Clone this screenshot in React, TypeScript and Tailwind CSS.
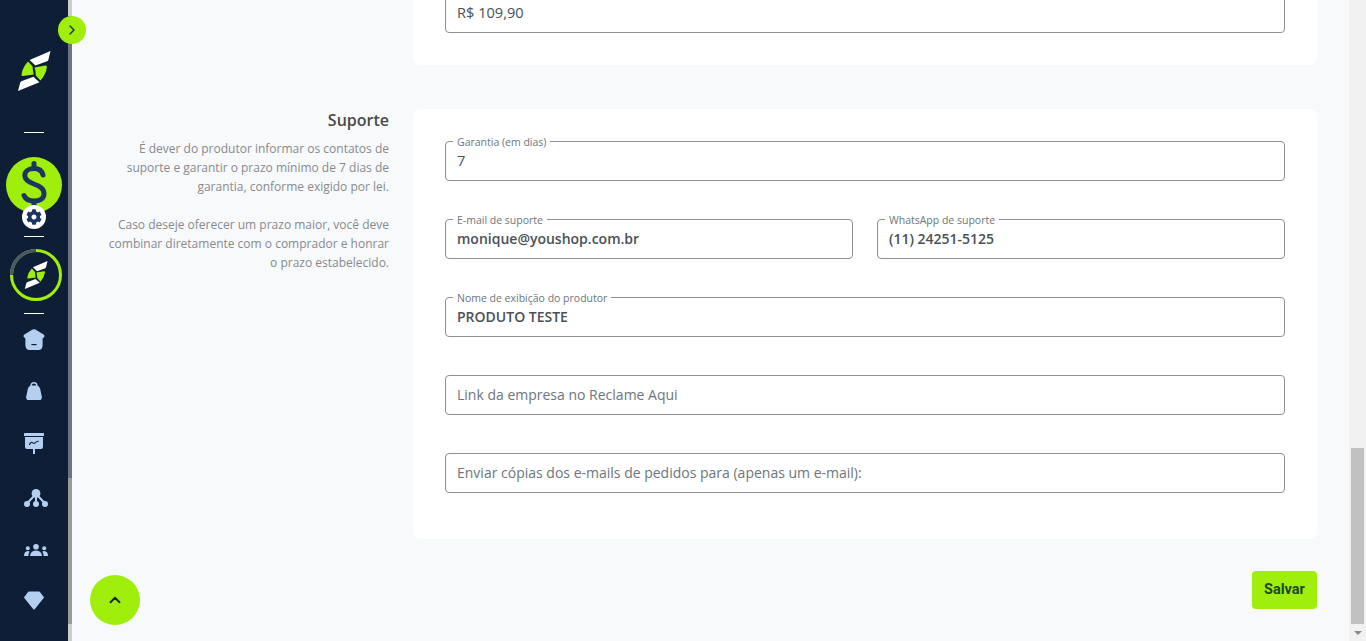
import { ChevronRight, ChevronUp } from "lucide-react";
import { FaCog } from "react-icons/fa";

const LIME = "bg-[#a0ee0c]";

function LogoPaths() {
  return (
    <>
      <path fill="#ffffff" d="M50.5 51 L48.3 60 Q48 61 46.4 61.6 L35.4 65.6 L29.6 60 Z" />
      <path fill="#a0ee0c" d="M28 61.6 L32.6 66.6 Q32.6 70.6 33.8 74.5 L23 76 Q21.2 76.2 21.5 74.4 Q22.6 67.5 28 61.6 Z" />
      <path fill="#a0ee0c" d="M40.4 80.6 L35.8 75.4 Q35.8 71.4 34.6 67.5 L45.4 65.6 Q47.2 65.4 46.9 67.2 Q45.8 74.6 40.4 80.6 Z" />
      <path fill="#ffffff" d="M18 91 L20.1 83 Q20.4 81.6 22 81 L33.4 76.8 L39.4 82.2 Z" />
    </>
  );
}

function SideDivider({ className }: { className: string }) {
  return <div className={`h-px w-5 bg-white ${className}`} />;
}

function Field({ label, value, placeholder, strong }: { label?: string; value?: string; placeholder?: string; strong?: boolean }) {
  return (
    <div className="relative flex h-10 min-w-0 items-center rounded-[4px] border border-[#8f8f8f] bg-white px-[11px] text-sm">
      {label && (
        <span className="absolute -top-[7px] left-[7px] bg-white px-1 text-[10.5px] leading-[14px] text-[#6c757d]">{label}</span>
      )}
      {value ? (
        <span className={`text-[#495057] ${strong ? "font-semibold" : "mb-[2px] text-[14.6px] font-medium"}`}>{value}</span>
      ) : (
        <span className="text-[#6c757d]">{placeholder}</span>
      )}
    </div>
  );
}

function Sidebar() {
  return (
    <aside className="flex h-full w-[68px] shrink-0 flex-col items-center bg-[#0e1e36] pt-[51px]">
      <svg viewBox="17 51 34 40" className="h-10 w-[34px]">
        <LogoPaths />
      </svg>
      <SideDivider className="mt-[41px]" />
      <div className={`relative mt-6 h-14 w-14 rounded-full ${LIME}`}>
        <svg viewBox="6 157 56 56" className="h-14 w-14" fill="none" stroke="#1a3560" strokeWidth="5" strokeLinecap="round">
          <path d="M43 175 C42 171 38.5 168.6 34 168.6 C28 168.6 24.8 171.6 24.8 175.5 C24.8 180 28.5 182 34 184 C40 186 44 188.5 44 193.5 C44 198.5 40 201 34 201 C29 201 25.5 199 24 195.5" />
          <path d="M34 163.5 V168 M34 202 V208" />
        </svg>
        <div className="absolute left-4 top-12 flex h-6 w-6 items-center justify-center rounded-full bg-white">
          <FaCog className="h-4 w-4 text-[#1a3560]" />
        </div>
      </div>
      <SideDivider className="mt-[23px]" />
      <svg viewBox="0 0 52 52" className="relative left-[2px] mt-3 h-[52px] w-[52px]" fill="none">
        <circle cx="26" cy="26" r="24.5" stroke="#a0ee0c" strokeWidth="3" />
        <path d="M1.5 26 A24.5 24.5 0 0 1 26 1.5" stroke="#4a5568" strokeWidth="3" />
        <svg x="14" y="12" width="24" height="28" viewBox="17 51 34 40">
          <LogoPaths />
        </svg>
      </svg>
      <SideDivider className="mt-3" />

      <svg viewBox="0 0 22 21" className="mt-[15px] h-[21px] w-[22px]">
        <path fill="#b5cff0" d="M9.6 0.6 Q11 -0.2 12.4 0.6 L20.6 5.4 Q22 6.4 21.2 8 L19.6 9.4 V16 Q19.6 21 15.4 21 H6.6 Q2.4 21 2.4 16 V9.4 L0.8 8 Q0 6.4 1.4 5.4 Z" />
        <path stroke="#0e1e36" strokeWidth="1.2" d="M8.4 15.6 H13.6" />
      </svg>
      <svg viewBox="0 0 16 18" className="mt-8 h-[18px] w-4">
        <path fill="#b5cff0" d="M8 0 C10.4 0 11.6 1.6 11.7 3.8 C13.4 4.6 14 6 14.4 8 L15.8 14.6 C16.2 16.8 15 18 13.4 18 H2.6 C1 18 -0.2 16.8 0.2 14.6 L1.6 8 C2 6 2.6 4.6 4.3 3.8 C4.4 1.6 5.6 0 8 0 Z" />
        <path fill="#0e1e36" d="M8 1.6 C6.8 1.6 6 2.4 5.9 3.4 H10.1 C10 2.4 9.2 1.6 8 1.6 Z" />
      </svg>
      <svg viewBox="0 0 20 21" className="mt-[33px] h-[21px] w-5">
        <rect x="0" y="0" width="20" height="3" rx="0.6" fill="#b5cff0" />
        <path fill="#b5cff0" d="M1 4 H19 V14 Q19 16 17 16 H11 V21 H9 V16 H3 Q1 16 1 14 Z" />
        <path fill="none" stroke="#0e1e36" strokeWidth="1.1" strokeLinecap="round" d="M5.5 11.5 Q7 8.5 8.6 9.6 Q10 11 11.4 9.6 Q12.6 8 14.4 8.2" />
      </svg>
      <svg viewBox="0 0 24 18" className="relative left-[2px] mt-[35px] h-[18px] w-6" fill="#b5cff0">
        <circle cx="12" cy="4.4" r="4.4" />
        <circle cx="3" cy="15" r="3" />
        <circle cx="12" cy="15" r="3" />
        <circle cx="21" cy="15" r="3" />
        <path fill="none" stroke="#b5cff0" strokeWidth="2" d="M10 7 L3.4 14 M12 7 V14 M14 7 L20.6 14" />
      </svg>
      <svg viewBox="0 0 24 12" className="relative left-[2px] mt-[37px] h-3 w-6" fill="#b5cff0">
        <circle cx="12" cy="2.8" r="2.8" />
        <circle cx="3.8" cy="4.2" r="2" />
        <circle cx="20.2" cy="4.2" r="2" />
        <path d="M6 12 Q6.4 6.6 12 6.4 Q17.6 6.6 18 12 Z" />
        <path d="M0 12 Q0 7.2 4 7 L5.6 7.6 Q4.6 9.4 4.4 12 Z" />
        <path d="M24 12 Q24 7.2 20 7 L18.4 7.6 Q19.4 9.4 19.6 12 Z" />
      </svg>
      <svg viewBox="0 0 21 19" className="mt-[35px] h-[19px] w-5">
        <path fill="#b5cff0" stroke="#b5cff0" strokeWidth="1.8" strokeLinejoin="round" d="M5 1 H16 L20 6.4 L10.5 18 L1 6.4 Z" />
      </svg>
    </aside>
  );
}

export default function App() {
  return (
    <div className="relative flex h-[641px] w-full overflow-hidden bg-[#f8f9fb] font-['Open_Sans',sans-serif]">
      <Sidebar />

      <div className="flex h-full w-1 shrink-0 flex-col">
        <div className="h-4 bg-[#cdcdcd]" />
        <div className="h-[462px] bg-[#6b7486]" />
        <div className="h-[146px] bg-[#999999]" />
        <div className="flex-1 bg-[#cdcdcd]" />
      </div>

      <main className="-mt-[7px] flex min-w-0 flex-1 flex-col pl-[25px] pr-8">
        <div className="flex gap-6">
          <div className="w-[292px] shrink-0" />
          <div className="flex-1 rounded-b-lg bg-white px-8 pb-8">
            <Field value="R$ 109,90" />
          </div>
        </div>

        <div className="mt-11 flex gap-6">
          <div className="w-[292px] shrink-0 pl-2 text-right">
            <h2 className="text-base font-semibold leading-[22px] text-[#4a4a4a]">Suporte</h2>
            <p className="mt-[7.6px] text-xs leading-[19.2px] text-[#868a8f]">
              É dever do produtor informar os contatos de suporte e garantir o prazo mínimo de 7 dias de garantia, conforme exigido por lei.
            </p>
            <p className="mt-[18.4px] text-xs leading-[19.2px] text-[#868a8f]">
              Caso deseje oferecer um prazo maior, você deve combinar diretamente com o comprador e honrar o prazo estabelecido.
            </p>
          </div>

          <div className="flex flex-1 flex-col gap-[38px] rounded-lg bg-white px-8 pb-[46px] pt-8">
            <Field label="Garantia (em dias)" value="7" />
            <div className="grid grid-cols-2 gap-6">
              <Field label="E-mail de suporte" value="monique@youshop.com.br" strong />
              <Field label="WhatsApp de suporte" value="(11) 24251-5125" strong />
            </div>
            <Field label="Nome de exibição do produtor" value="PRODUTO TESTE" strong />
            <Field placeholder="Link da empresa no Reclame Aqui" />
            <Field placeholder="Enviar cópias dos e-mails de pedidos para (apenas um e-mail):" />
          </div>
        </div>

        <div className="mt-8 flex justify-end">
          <button className={`h-[38px] w-[65px] rounded-[4px] ${LIME} font-['Roboto',sans-serif] text-[14.5px] font-bold text-[#1a4a1c]`}>
            Salvar
          </button>
        </div>
      </main>

      <div className="flex h-full w-[17px] shrink-0 flex-col items-center justify-end bg-[#f1f1f1]">
        <div className="h-[176px] w-[13px] bg-[#c1c1c1]" />
        <div className="flex h-[17px] items-center justify-center">
          <div className="h-0 w-0 border-x-4 border-t-4 border-x-transparent border-t-[#8a8a8a]" />
        </div>
      </div>

      <button className={`absolute left-[58px] top-4 flex h-7 w-7 items-center justify-center rounded-full ${LIME}`}>
        <ChevronRight className="h-4 w-4 text-[#14303a]" strokeWidth={2} />
      </button>
      <button className={`absolute left-[90px] top-[575px] flex h-[50px] w-[50px] items-center justify-center rounded-full ${LIME}`}>
        <ChevronUp className="h-[18px] w-[18px] text-[#12283a]" strokeWidth={2.5} />
      </button>
    </div>
  );
}
